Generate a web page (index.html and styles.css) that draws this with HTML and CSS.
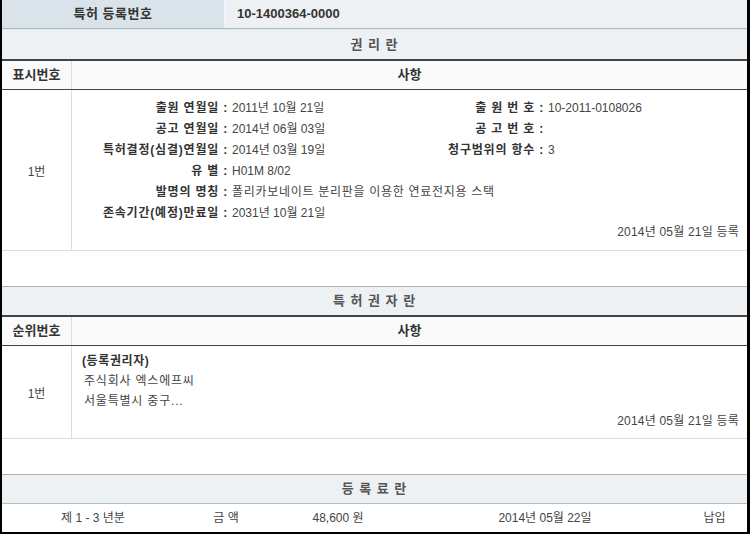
FILE: index.html
```html
<!DOCTYPE html>
<html>
<head>
    <title>특허 등록원부</title>
    <link rel="stylesheet" href="styles.css">
</head>
<body>
    <div class="sheet">
        <div class="reg-row">
            <div class="reg-label">특허 등록번호</div>
            <div class="reg-value">10-1400364-0000</div>
        </div>

        <!-- 권리란 -->
        <div class="block-title first">권 리 란</div>
        <div class="col-head">
            <div class="no">표시번호</div>
            <div class="desc">사항</div>
        </div>
        <div class="col-body rights">
            <div class="no">1번</div>
            <div class="desc">
                <div class="facts">
                    <div class="label">출원 연월일 :</div>
                    <div class="value">2011년 10월 21일</div>
                    <div class="label">출 원 번 호 :</div>
                    <div class="value">10-2011-0108026</div>

                    <div class="label">공고 연월일 :</div>
                    <div class="value">2014년 06월 03일</div>
                    <div class="label">공 고 번 호 :</div>
                    <div class="value"></div>

                    <div class="label">특허결정(심결)연월일 :</div>
                    <div class="value">2014년 03월 19일</div>
                    <div class="label">청구범위의 항수 :</div>
                    <div class="value">3</div>

                    <div class="label">유 별 :</div>
                    <div class="value wide">H01M 8/02</div>

                    <div class="label">발명의 명칭 :</div>
                    <div class="value wide text">폴리카보네이트 분리판을 이용한 연료전지용 스택</div>

                    <div class="label">존속기간(예정)만료일 :</div>
                    <div class="value wide">2031년 10월 21일</div>
                </div>
                <div class="stamp">2014년 05월 21일 등록</div>
            </div>
        </div>

        <div class="spacer"></div>

        <!-- 특허권자란 -->
        <div class="block-title">특 허 권 자 란</div>
        <div class="col-head">
            <div class="no">순위번호</div>
            <div class="desc">사항</div>
        </div>
        <div class="col-body owners">
            <div class="no">1번</div>
            <div class="desc">
                <div class="owner-kind">(등록권리자)</div>
                <div class="owner-line">주식회사 엑스에프씨</div>
                <div class="owner-line">서울특별시 중구...</div>
                <div class="stamp">2014년 05월 21일 등록</div>
            </div>
        </div>

        <div class="spacer"></div>

        <!-- 등록료란 -->
        <div class="block-title plain">등 록 료 란</div>
        <div class="fee-row">
            <div>제 1 - 3 년분</div>
            <div>금 액</div>
            <div>48,600 원</div>
            <div>2014년 05월 22일</div>
            <div>납입</div>
        </div>
    </div>
</body>
</html>
```

FILE: styles.css
```css
html, body { margin: 0; padding: 0; background: #fff; }
body {
    font-family: "Liberation Sans", "Noto Sans CJK KR", sans-serif;
    font-size: 12px;
    color: #444;
}
.sheet {
    width: 745px;
    border-left: 2px solid #000;
    border-right: 3px solid #000;
    border-bottom: 2px solid #000;
}

/* registration number */
.reg-row {
    display: flex;
    height: 28px;
    border-bottom: 1px solid #a9bec1;
}
.reg-label {
    width: 222px;
    background: #d9e3e9;
    border-right: 1px solid #f2f6f8;
    text-align: center;
    line-height: 28px;
    font-size: 13px;
    font-weight: bold;
    letter-spacing: 0.5px;
    color: #333;
}
.reg-value {
    flex: 1;
    background: #edf1f4;
    padding-left: 12px;
    line-height: 28px;
    font-size: 13px;
    font-weight: bold;
    color: #333;
}

/* section titles */
.block-title {
    height: 28px;
    line-height: 28px;
    background: #edf1f4;
    border-top: 1px solid #aab3b8;
    border-bottom: 2px solid #444;
    text-align: center;
    font-size: 13px;
    font-weight: bold;
    letter-spacing: 1px;
    color: #555;
}
.block-title.first { border-top: 1px solid #dfe8ea; height: 29px; line-height: 29px; }
.block-title.plain { border-bottom: 1px solid #b3bdc2; }

/* column headers */
.col-head {
    display: flex;
    height: 28px;
    line-height: 28px;
    background: #fafafa;
    border-bottom: 1px solid #444;
    font-size: 13px;
    font-weight: bold;
    color: #333;
}
.col-head .no, .col-body .no {
    width: 69px;
    border-right: 1px solid #ddd;
    text-align: center;
}
.col-head .desc { flex: 1; text-align: center; }

.col-body {
    display: flex;
    border-bottom: 1px solid #ddd;
}
.col-body .no {
    display: flex;
    align-items: center;
    justify-content: center;
}
.col-body .desc { flex: 1; }
.rights { height: 160px; }
.owners { height: 92px; }

.facts {
    display: grid;
    grid-template-columns: 156px 160px 156px 1fr;
    padding-top: 8px;
}
.facts .label, .facts .value { line-height: 21px; }
.facts .label {
    text-align: right;
    font-weight: bold;
    letter-spacing: 0.8px;
    color: #333;
}
.facts .value { padding-left: 4px; }
.facts .value.wide { grid-column: 2 / 5; }
.facts .value.text { letter-spacing: 0.7px; }

.stamp {
    text-align: right;
    padding-right: 8px;
    line-height: 16px;
    letter-spacing: 0.2px;
}

.owners .desc { padding: 5px 0 0 10px; }
.owner-kind { line-height: 20px; font-weight: bold; letter-spacing: 0.6px; color: #333; }
.owner-line { line-height: 20px; padding-left: 2px; letter-spacing: 0.8px; }
.owners .stamp { line-height: 20px; }

.spacer { height: 35px; }

/* fee row */
.fee-row {
    display: grid;
    grid-template-columns: 182px 84px 140px 274px 1fr;
    height: 28px;
    line-height: 28px;
    text-align: center;
}
```
